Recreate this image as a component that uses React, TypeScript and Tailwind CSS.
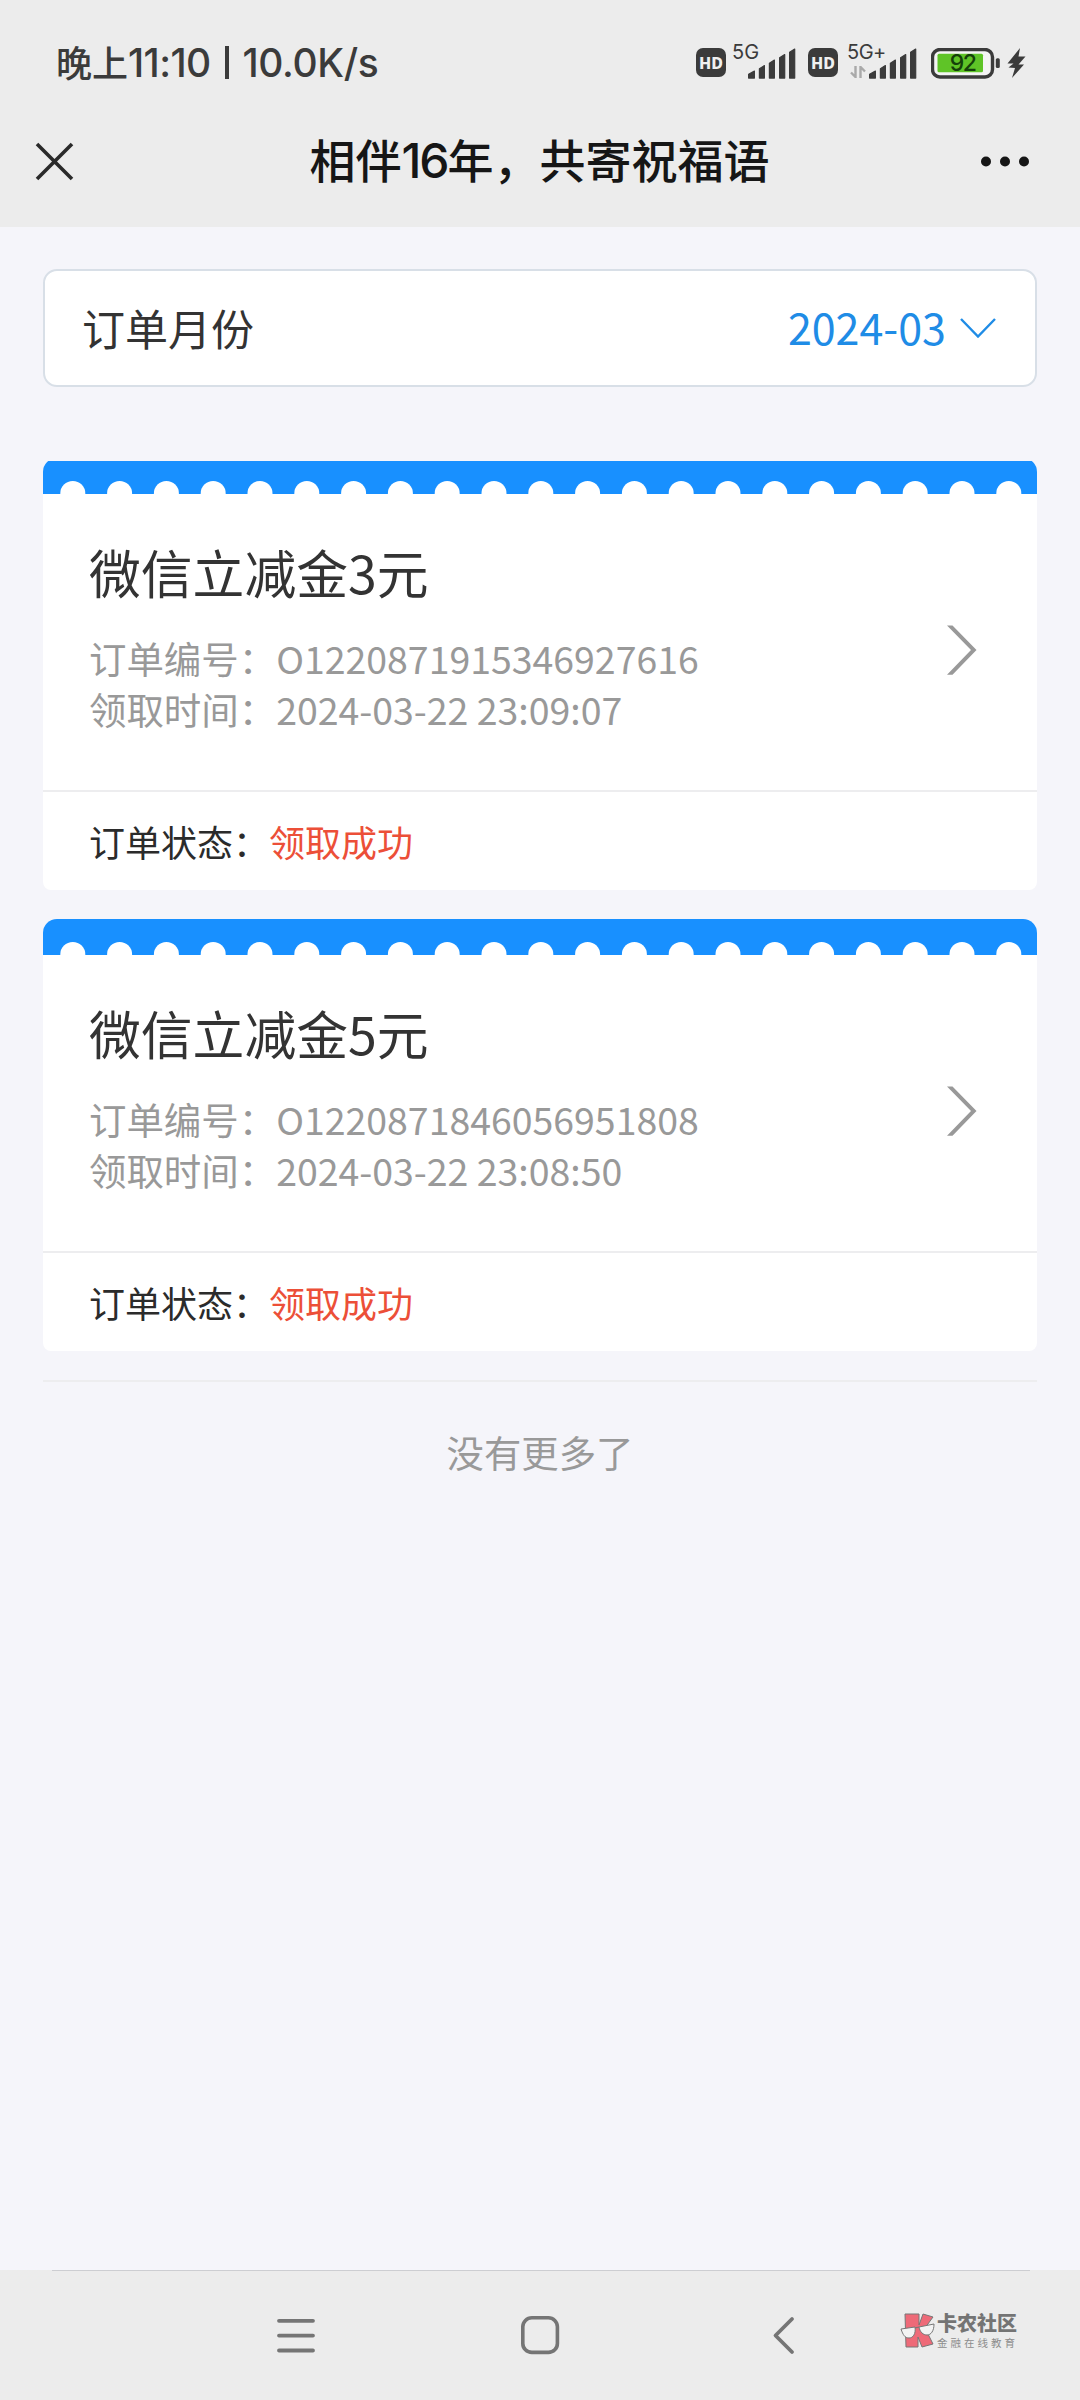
import React from 'react';

const orders = [
  { title: '微信立减金3元', code: 'O1220871915346927616', time: '2024-03-22 23:09:07', status: '领取成功' },
  { title: '微信立减金5元', code: 'O1220871846056951808', time: '2024-03-22 23:08:50', status: '领取成功' },
];

const HdBadge = () => (
  <div className="flex h-[29px] w-[30px] items-center justify-center rounded-[7px] bg-[#3b3b3b] font-['Noto_Sans'] text-[16px] leading-none font-extrabold text-[#f0f0f0]">
    HD
  </div>
);

const bars = [
  { x: 0, w: 7, y: 22.5 },
  { x: 10.8, w: 6.2, y: 17 },
  { x: 20.8, w: 6.2, y: 11.5 },
  { x: 31, w: 6.3, y: 6 },
  { x: 41, w: 6.3, y: 0.5 },
];

const SignalBars = () => (
  <svg width="48" height="31" viewBox="0 0 48 31" fill="#3b3b3b" stroke="#3b3b3b" strokeWidth="1.2" strokeLinejoin="round">
    {bars.map((bar) => (
      <path key={bar.x} d={`M${bar.x + 0.6} 30.1V${bar.y + 3.8}L${bar.x + bar.w - 0.6} ${bar.y + 0.6}V30.1Z`} />
    ))}
  </svg>
);

const StatusBar = () => (
  <div className="flex h-[100px] items-start justify-between pt-[38px] pr-[53px] pl-[56px] text-[#3b3b3b]">
    <div className="flex h-[46px] items-center font-medium whitespace-pre">
      <span className="text-[36px]">晚上</span>
      <span className="pt-[5px] font-['Inter'] text-[39px] tracking-[-0.6px]">11:10</span>
      <div className="mx-[14px] mt-[3px] h-[33px] w-[4px] bg-[#3b3b3b]"></div>
      <span className="pt-[5px] font-['Inter'] text-[39px] tracking-[-0.4px]">10.0K/s</span>
    </div>
    <div className="flex items-start pt-[10px]">
      <HdBadge />
      <div className="relative ml-[22px]">
        <SignalBars />
        <span className="absolute -top-[6px] -left-[16px] font-['Inter'] text-[20px] leading-[20px]">5G</span>
      </div>
      <div className="ml-[12px]">
        <HdBadge />
      </div>
      <div className="relative ml-[31px]">
        <SignalBars />
        <span className="absolute -top-[6px] -left-[22px] font-['Inter'] text-[20px] leading-[20px] tracking-[-0.5px]">5G+</span>
        <svg className="absolute top-[18px] -left-[19px]" width="16" height="12" viewBox="0 0 16 12" fill="none" stroke="#a9a9a9" strokeWidth="2.4">
          <path d="M5.5 0V11L1 6.5M10.5 12V1L15 5.5" />
        </svg>
      </div>
      <div className="relative ml-[14px]">
        <svg width="96" height="31" viewBox="0 0 96 31">
          <rect x="1.5" y="1.5" width="60" height="27.5" rx="7.5" fill="#f4f4f4" stroke="#3b3b3b" strokeWidth="3.4" />
          <rect x="6.5" y="5.8" width="45.5" height="18.5" rx="1.5" fill="#5fc427" />
          <rect x="64.8" y="10.3" width="4" height="9.8" rx="1.5" fill="#3b3b3b" />
          <path d="M89 0L76.5 15.5H82.5L77.5 19.5L84 20L81 30L93 16.5H87.5L94.5 8.5H87.5Z" fill="#3b3b3b" />
        </svg>
        <span className="absolute top-0 left-0 w-[63px] text-center font-['Inter'] text-[23px] leading-[31px] tracking-[-1.5px] font-medium text-[#14400a]">92</span>
      </div>
    </div>
  </div>
);

const TitleBar = () => (
  <div className="flex h-[127px] items-start justify-between pt-[28px] pr-[50px] pl-[35px]">
    <svg className="mt-[14px]" width="40" height="40" viewBox="0 0 40 40" fill="none" stroke="#2a2a2a" strokeWidth="3.6">
      <path d="M2 2L37 37M37 2L2 37" />
    </svg>
    <h1 className="flex h-[60px] items-center pl-[24px] text-[46px] font-medium text-[#161616]">
      相伴<span className="pt-[5px] font-['Inter'] text-[48px] tracking-[-2px]">16</span>年，共寄祝福语
    </h1>
    <svg className="mt-[28px]" width="50" height="12" viewBox="0 0 50 12" fill="#161616">
      <circle cx="6" cy="5.5" r="5" />
      <circle cx="25" cy="5.5" r="5" />
      <circle cx="44" cy="5.5" r="5" />
    </svg>
  </div>
);

const MonthPicker = () => (
  <div className="flex h-[118px] items-center justify-between rounded-[14px] border-2 border-[#d8dfe7] bg-white pr-[38px] pb-[2px] pl-[37px] text-[43px] leading-[60px]">
    <span className="text-[#333]">订单月份</span>
    <span className="flex items-center gap-[13px] pb-[2px] text-[#1f8ce6]">
      2024-03
      <svg className="mt-[3px]" width="38" height="22" viewBox="0 0 38 22" fill="none" stroke="currentColor" strokeWidth="2.4">
        <path d="M2 2L19 19.5L36 2" />
      </svg>
    </span>
  </div>
);

// blue strip with a row of punched half circles along the bottom edge
const TicketEdge = () => (
  <svg className="block" width="994" height="36" viewBox="0 0 994 36">
    <rect width="994" height="36" fill="#1890ff" />
    {Array.from({ length: 21 }, (_, i) => (
      <circle key={i} cx={29.8 + i * 46.8} cy="35.4" r="12.5" fill="#fff" />
    ))}
  </svg>
);

const OrderCard = ({ order }: { order: (typeof orders)[number] }) => (
  <div className="h-[432px] overflow-hidden rounded-t-[14px] rounded-b-[8px] bg-white">
    <TicketEdge />
    <div className="flex h-[298px] items-start justify-between border-b-2 border-[#ededef] pt-[48px] pr-[60px] pl-[46px]">
      <div>
        <h2 className="text-[51.8px] leading-[60px] text-[#333]">{order.title}</h2>
        <div className="mt-[31px] text-[37.45px] leading-[51px] text-[#999]">
          <p>订单编号：{order.code}</p>
          <p>领取时间：{order.time}</p>
        </div>
      </div>
      <svg className="mt-[83px]" width="30" height="51" viewBox="0 0 30 51" fill="#999">
        <path d="M0 0.5H5.5L29.5 25L5.5 49.8H0L24 25Z" />
      </svg>
    </div>
    <div className="flex h-[98px] items-center pb-px pl-[46px] text-[36px] leading-[50px] text-[#2b2b2b]">
      订单状态：<span className="text-[#ec4f38]">{order.status}</span>
    </div>
  </div>
);

const Watermark = () => (
  <div className="flex items-start">
    <svg width="36" height="36" viewBox="0 0 36 36" stroke="#777" strokeWidth="1">
      <path d="M5 1H19V12L23 1L33 4L25 15L33 31L22 34L18 24V34H6Z" fill="#ee6a78" />
      <path d="M1 16L15 14C16 21 13 25 9 25C5 25 3 22 1 16Z" fill="#f3f3f3" />
      <path d="M19 14L34 11C34 18 31 22 27 22C23 22 20 19 19 14Z" fill="#f3f3f3" />
      <path d="M15 15L19 14" fill="none" />
    </svg>
    <div className="pl-px whitespace-nowrap">
      <div className="text-[20px] leading-[20px] font-black text-[#747474]">卡农社区</div>
      <div className="mt-[4px] text-[10.5px] leading-[12px] tracking-[3px] text-[#8c8c8c]">金融在线教育</div>
    </div>
  </div>
);

const NavBar = () => (
  <div className="h-[130px] bg-[#ececec]">
    <div className="mr-[50px] ml-[52px] h-px bg-[#cdced2]"></div>
    <div className="flex items-start pt-[42px] pl-[276px]">
      <svg className="mt-[3px]" width="40" height="40" viewBox="0 0 40 40" stroke="#757575" strokeWidth="3.8" strokeLinecap="round">
        <path d="M3 4.8H37M3 19.6H37M3 34.5H37" />
      </svg>
      <svg className="ml-[204px]" width="40" height="44" viewBox="0 0 40 44" fill="none" stroke="#757575" strokeWidth="3.6">
        <rect x="2.8" y="4.8" width="34.6" height="34.6" rx="9" />
      </svg>
      <svg className="ml-[206px]" width="30" height="44" viewBox="0 0 30 44" fill="none" stroke="#757575" strokeWidth="3.8" strokeLinecap="round" strokeLinejoin="round">
        <path d="M26 6L9.5 22.5L26 39" />
      </svg>
      <div className="ml-[104px]">
        <Watermark />
      </div>
    </div>
  </div>
);

export default function App() {
  return (
    <div className="flex h-[2400px] w-[1080px] flex-col overflow-hidden bg-[#f5f5fa] font-['Noto_Sans_CJK_SC',sans-serif]">
      <header className="bg-[#ececec]">
        <StatusBar />
        <TitleBar />
      </header>
      <main className="flex-1 px-[43px] pt-[42px]">
        <MonthPicker />
        <div className="mt-[74px] overflow-hidden">
          <div className="-mt-[3px] flex flex-col gap-[29px]">
            {orders.map((order) => (
              <OrderCard key={order.code} order={order} />
            ))}
          </div>
        </div>
        <div className="mt-[29px] h-[2px] bg-[#ededef]"></div>
        <p className="mt-[45px] text-center text-[37.4px] leading-[50px] text-[#999]">没有更多了</p>
      </main>
      <NavBar />
    </div>
  );
}
